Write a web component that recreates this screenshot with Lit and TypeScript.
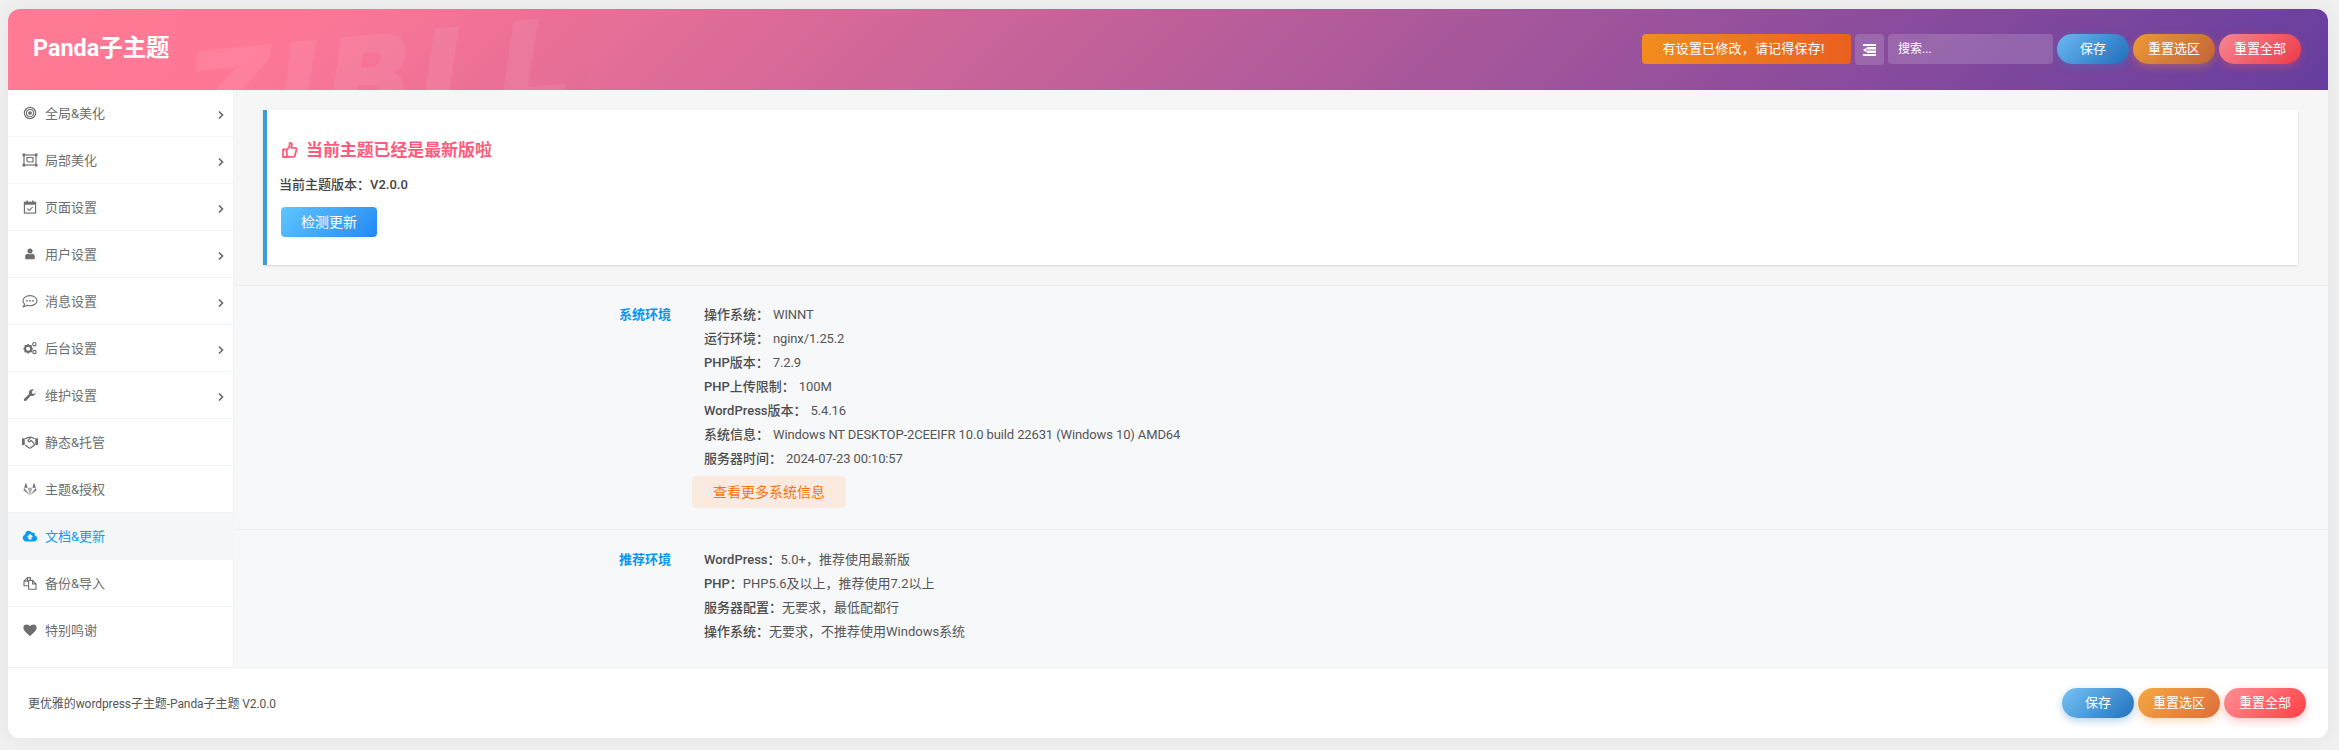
import { LitElement, html, css, svg } from "lit";
import { customElement } from "lit/decorators.js";

const ic = (body: unknown, s = 1) => html`<svg class="ic" viewBox="0 0 16 16" width="16" height="16" aria-hidden="true"><g transform="translate(8 8) scale(${s}) translate(-8 -8)">${body}</g></svg>`;

const icons: Record<string, unknown> = {
  target: ic(svg`<circle cx="8" cy="8" r="6.6" fill="none" stroke="currentColor" stroke-width="1.500"/><circle cx="8" cy="8" r="4.200" fill="none" stroke="currentColor" stroke-width="1.200"/><circle cx="8" cy="8" r="2.200" fill="currentColor"/>`, 0.85),
  crop: ic(svg`<g fill="none" stroke="currentColor" stroke-width="1.200"><rect x="2" y="3" width="12" height="10"/><path d="M5 5.500h6v4.500H6.500L5 9z"/></g><g fill="currentColor"><rect x="0.500" y="1.500" width="2.600" height="2.600"/><rect x="12.900" y="1.500" width="2.600" height="2.600"/><rect x="0.500" y="11.900" width="2.600" height="2.600"/><rect x="12.900" y="11.900" width="2.600" height="2.600"/></g>`),
  cal: ic(svg`<rect x="2.100" y="3" width="11.800" height="11.400" fill="none" stroke="currentColor" stroke-width="1.200"/><rect x="2" y="3" width="12" height="2.600" fill="currentColor"/><rect x="4.200" y="1.200" width="1.600" height="3" fill="currentColor"/><rect x="10.200" y="1.200" width="1.600" height="3" fill="currentColor"/><path d="M5.200 9.600l2 2 3.600-3.600" fill="none" stroke="currentColor" stroke-width="1.100"/>`, 0.95),
  user: ic(svg`<circle cx="8" cy="4.200" r="3.200" fill="currentColor"/><path d="M3 14.600c-.6 0-1-.4-1-1V11c0-2 1.400-3.400 3.200-3.400.8.500 1.800.8 2.800.8s2-.3 2.800-.8C12.600 7.600 14 9 14 11v2.600c0 .6-.4 1-1 1z" fill="currentColor"/>`, 0.8),
  chat: ic(svg`<path d="M8 2.600c-3.900 0-7 2.300-7 5.200 0 1.300.6 2.400 1.600 3.300-.2 1-.8 1.900-1.300 2.500 1.400-.1 2.600-.6 3.400-1.300.9.300 2 .5 3.300.5 3.900 0 7-2.300 7-5S11.900 2.600 8 2.600z" fill="none" stroke="currentColor" stroke-width="1.100"/><circle cx="5" cy="7.800" r=".9" fill="currentColor"/><circle cx="8" cy="7.800" r=".9" fill="currentColor"/><circle cx="11" cy="7.800" r=".9" fill="currentColor"/>`),
  cogs: ic(svg`<circle cx="6" cy="8.800" r="3.300" fill="none" stroke="currentColor" stroke-width="2.200"/><g stroke="currentColor" stroke-width="1.800"><path d="M6 3.600v2M6 12v2M.8 8.800h2M9.200 8.800h2M2.300 5.100l1.400 1.400M8.300 11.100l1.400 1.400M2.300 12.500l1.400-1.400M8.300 6.500l1.400-1.400"/></g><circle cx="12.800" cy="3.800" r="1.800" fill="none" stroke="currentColor" stroke-width="1.300"/><circle cx="12.800" cy="12.400" r="1.800" fill="none" stroke="currentColor" stroke-width="1.300"/>`, 0.92),
  wrench: ic(svg`<path d="M15.300 4.200l-2.500 2.500-2.300-.4-.4-2.300L12.600 1.500c-1.600-.7-3.500-.3-4.700.9-1.200 1.200-1.500 2.900-1 4.400L1.200 12.500c-.6.600-.6 1.600 0 2.200s1.600.6 2.200 0l5.700-5.700c1.500.5 3.200.2 4.400-1 1.200-1.200 1.600-3 .9-4.600z" fill="currentColor"/>`, 0.85),
  hands: ic(svg`<g fill="none" stroke="currentColor" stroke-width="1.200" stroke-linejoin="round"><path d="M3.500 4.800C5.500 4.200 6.500 3.300 8.500 3.400c1.500 0 2.600 1 4 1.400M3.500 10.800l3.300 2.700c.8.500 1.700.4 2.300-.2l3.400-2.700"/><path d="M8.500 3.800L6.300 6.500c-.5.900.8 1.700 1.600 1l1.300-1.100 3.200 4.100"/></g><path d="M0 4.500h3v6.400H0zM13 4.500h3v6.400h-3z" fill="currentColor"/>`, 1.05),
  gitlab: ic(svg`<path d="M8 15.200L5.200 6.600h5.600z" fill="currentColor" opacity=".55"/><path d="M8 15.200L.8 9.800c-.3-.2-.4-.5-.3-.8l.8-2.400zM8 15.200l7.200-5.400c.3-.2.4-.5.3-.8l-.8-2.400z" fill="currentColor" opacity=".85"/><path d="M1.300 6.600L3 1.400c.1-.3.500-.3.600 0l1.600 5.200zM14.700 6.600L13 1.400c-.1-.3-.5-.3-.6 0l-1.600 5.200z" fill="currentColor"/>`, 0.87),
  cloud: ic(svg`<path fill-rule="evenodd" d="M13.300 7.400c.1-.3.200-.6.200-1 0-1.300-1-2.300-2.300-2.300-.5 0-1 .2-1.300.4C9.200 3.100 7.900 2.300 6.500 2.300c-2.100 0-3.800 1.700-3.800 3.800v.3C1.100 7 0 8.500 0 10.200c0 2.100 1.700 3.800 3.800 3.800h8.800C14.500 14 16 12.500 16 10.600c0-1.500-1.100-2.800-2.700-3.200zM9.700 9.100v2.800H6.300V9.100H4.500L8 5.600l3.500 3.500z" fill="currentColor"/>`, 0.9),
  copy: ic(svg`<g fill="none" stroke="currentColor" stroke-width="1.200" stroke-linejoin="round"><path d="M6.500 11H1.500V6L5.200 2.200h3.300v3"/><path d="M5.200 2.200V6H1.500"/><path d="M6.500 5.200h4.300L14.500 9v5.800h-8z"/><path d="M10.800 5.200V9h3.700"/></g>`, 0.92),
  heart: ic(svg`<path d="M8 15C6 13 .3 9.300.3 5.300.3 3 2.100 1.600 4.200 1.600 5.800 1.600 7.200 2.400 8 3.700 8.800 2.400 10.200 1.600 11.800 1.600c2.100 0 3.900 1.400 3.900 3.700C15.700 9.300 10 13 8 15z" fill="currentColor"/>`, 0.86),
};

const NAV = [
  ["target", "全局&美化", true],
  ["crop", "局部美化", true],
  ["cal", "页面设置", true],
  ["user", "用户设置", true],
  ["chat", "消息设置", true],
  ["cogs", "后台设置", true],
  ["wrench", "维护设置", true],
  ["hands", "静态&托管", false],
  ["gitlab", "主题&授权", false],
  ["cloud", "文档&更新", false],
  ["copy", "备份&导入", false],
  ["heart", "特别鸣谢", false],
] as const;

const SYS = [
  ["操作系统：", "WINNT"],
  ["运行环境：", "nginx/1.25.2"],
  ["PHP版本：", "7.2.9"],
  ["PHP上传限制：", "100M"],
  ["WordPress版本：", "5.4.16"],
  ["系统信息：", "Windows NT DESKTOP-2CEEIFR 10.0 build 22631 (Windows 10) AMD64"],
  ["服务器时间：", "2024-07-23 00:10:57"],
];

const REC = [
  ["WordPress：", "5.0+，推荐使用最新版"],
  ["PHP：", "PHP5.6及以上，推荐使用7.2以上"],
  ["服务器配置：", "无要求，最低配都行"],
  ["操作系统：", "无要求，不推荐使用Windows系统"],
];

@customElement("app-root")
export class AppRoot extends LitElement {
  static styles = css`
    :host {
      display: block;
      height: 750px;
      background: #f0f0f1;
      font-family: Roboto, "Noto Sans CJK SC", sans-serif;
      font-size: 13px;
      color: #555;
      overflow: hidden;
    }
    .page { padding: 9px 11px 0 8px; }
    .wrap {
      height: 729px;
      border-radius: 12px;
      background: #fff;
      overflow: hidden;
      display: flex;
      flex-direction: column;
      box-shadow: 0 0 20px rgba(0, 0, 0, 0.05);
    }
    .head {
      position: relative;
      overflow: hidden;
      height: 81px;
      flex: none;
      display: flex;
      align-items: flex-start;
      background: linear-gradient(135deg, #ff7a94 0%, #fe7896 12%, #663e9f 100%);
      color: #fff;
    }
    .mark {
      position: absolute;
      left: 170px;
      top: 33px;
      font: 700 114px/1 "DejaVu Sans", sans-serif;
      letter-spacing: 7px;
      color: #fff;
      -webkit-text-stroke: 3px #fff;
      opacity: 0.065;
      transform-origin: 0 100%;
      transform: rotate(-5.4deg) skewX(-14deg);
      pointer-events: none;
    }
    .title {
      position: relative;
      margin: 22px 0 0 25px;
      font-size: 23.4px;
      line-height: 34px;
      font-weight: 700;
    }
    .tools {
      position: relative;
      margin-left: auto;
      margin-right: 27px;
      margin-top: 25px;
      display: flex;
      gap: 4px;
      align-items: flex-start;
    }
    .notice {
      width: 203px;
      padding-right: 6px;
      height: 30px;
      border-radius: 4px;
      background: linear-gradient(90deg, #f28c1e, #e9601f);
      font-size: 13px;
      letter-spacing: 0.2px;
      line-height: 30px;
      text-align: center;
    }
    .toggle {
      width: 29px;
      height: 31px;
      border-radius: 4px;
      background: rgba(255, 255, 255, 0.16);
      display: flex;
      align-items: center;
      justify-content: center;
    }
    .search {
      width: 155px;
      height: 30px;
      padding-left: 10px;
      border-radius: 4px;
      background: rgba(255, 255, 255, 0.16);
      font-size: 12px;
      line-height: 30px;
    }
    .pill {
      height: 30px;
      border-radius: 15px;
      color: #fff;
      font-size: 13px;
      line-height: 30px;
      text-align: center;
      width: 82px;
    }
    .pill.save { width: 72px; background: linear-gradient(135deg, #76c4f5, #2270bd); box-shadow: 0 3px 9px rgba(48,128,200,.35); }
    .pill.sel { background: linear-gradient(135deg, #f6a840, #db6f3b); box-shadow: 0 3px 9px rgba(240,140,50,.35); }
    .pill.all { background: linear-gradient(135deg, #ff8f94, #ff3f46); box-shadow: 0 3px 9px rgba(255,80,90,.35); }
    .head .pill.save { background: linear-gradient(135deg, #6cb8f2, #1f6dbb); }
    .head .pill.sel { background: linear-gradient(135deg, #ee9a36, #c1633a); }
    .head .pill.all { background: linear-gradient(135deg, #f58792, #ee3a48); }
    .mid { flex: 1; display: flex; min-height: 0; }
    .nav { width: 225px; flex: none; background: #fff; border-right: 1px solid #f2f3f5; }
    .item {
      height: 46px;
      border-bottom: 1px solid #f3f4f6;
      display: flex;
      align-items: center;
      padding: 0 11px 0 14px;
      color: #6e6e6e;
      font-size: 13px;
    }
    .item:last-child { border-bottom: 0; }
    .item span { padding-bottom: 2px; }
    .item.on { background: #f6f7f9; color: #0a9cf5; border-bottom-color: #f6f7f9; }
    .item .ic { flex: none; margin-right: 7px; }
    .item .chev { margin-left: auto; margin-top: 4px; margin-right: -3px; }
    .main { flex: 1; background: #f6f6f6; min-width: 0; display: flex; flex-direction: column; }
    .top { padding: 20px 30px 20px 29px; border-bottom: 1px solid #eeeff1; }
    .card {
      height: 155px;
      box-sizing: border-box;
      background: #fff;
      border-left: 4px solid #3a9fd6;
      box-shadow: 0 1px 2px rgba(0, 0, 0, 0.12);
      padding: 28px 12px 0 12px;
    }
    .h { display: flex; align-items: center; gap: 8px; color: #ff5b7c; font-size: 16.9px; font-weight: 700; line-height: 24px; margin-left: 3px; }
    .ver { margin-top: 13px; line-height: 20px; font-weight: 500; color: #444; }
    .ver b { font-weight: 500; }
    .check {
      margin: 12px 0 0 2px;
      width: 96px;
      height: 30px;
      border-radius: 4px;
      background: linear-gradient(135deg, #5fc6ff, #2389f5);
      color: #fff;
      font-size: 14px;
      line-height: 30px;
      text-align: center;
    }
    .sec { background: #f7f8fa; display: flex; border-bottom: 1px solid #eeeff1; }
    .sec.a { height: 244px; box-sizing: border-box; padding-top: 17px; }
    .sec.b { flex: 1; border-bottom: 0; padding-top: 18px; }
    .lab { width: 470px; flex: none; text-align: right; padding-right: 33px; box-sizing: border-box; color: #0a94f5; font-weight: 700; line-height: 24px; }
    .lines { line-height: 24px; }
    .lines b { font-weight: 500; color: #4d4d4d; }
    .k { margin-right: 4px; }
    .v { letter-spacing: -0.12px; }
    .more {
      display: block;
      margin: 5px 0 0 -12px;
      width: 154px;
      height: 32px;
      border-radius: 4px;
      background: #fbeadf;
      color: #f9730f;
      font-size: 14px;
      line-height: 32px;
      text-align: center;
    }
    .foot {
      height: 71px;
      flex: none;
      border-top: 1px solid #f0f1f3;
      box-sizing: border-box;
      background: #fff;
      display: flex;
      align-items: center;
      padding: 0 22px 0 20px;
      font-size: 12px;
      color: #555;
    }
    .foot .txt { letter-spacing: -0.08px; padding-bottom: 2px; }
    .foot .btns { margin-left: auto; display: flex; gap: 4px; }
  `;

  btns() {
    return html`<div class="pill save">保存</div><div class="pill sel">重置选区</div><div class="pill all">重置全部</div>`;
  }

  render() {
    return html`<div class="page"><div class="wrap">
      <header class="head">
        <div class="mark">ZIBLL</div>
        <div class="title">Panda子主题</div>
        <div class="tools">
          <div class="notice">有设置已修改，请记得保存!</div>
          <div class="toggle"><svg viewBox="0 0 13 12" width="13" height="12"><path fill="#fff" d="M0 0h13v2H0zM4 3h9v2.500H4zM4 6.500h9V9H4zM0 10h13v2H0zM3.500 3.500v5L0 6z"/></svg></div>
          <div class="search">搜索...</div>
          ${this.btns()}
        </div>
      </header>
      <div class="mid">
        <nav class="nav">
          ${NAV.map(([i, t, c]) => html`<div class="item ${t === "文档&更新" ? "on" : ""}">
            ${icons[i]}<span>${t}</span>
            ${c ? html`<svg class="chev" viewBox="0 0 8 10" width="8" height="10"><path d="M2 1.500L5.500 5 2 8.500" fill="none" stroke="#666" stroke-width="1.600"/></svg>` : ""}
          </div>`)}
        </nav>
        <main class="main">
          <div class="top"><div class="card">
            <div class="h"><svg viewBox="0 0 16 16" width="16" height="16"><path d="M4.800 7.500H1v7.500h3.800zM4.800 8l2.700-3.500V1.600c0-.8 2-1 2.400.5.300 1.200-.3 2.600-.8 3.700h4.200c1 0 1.500 1 1.200 1.800L12.900 13.600c-.2.800-.7 1.200-1.400 1.200H7c-.8 0-1.600-.4-2.200-.9" fill="none" stroke="currentColor" stroke-width="1.800" stroke-linejoin="round"/></svg><span>当前主题已经是最新版啦</span></div>
            <div class="ver">当前主题版本：<b>V2.0.0</b></div>
            <div class="check">检测更新</div>
          </div></div>
          <section class="sec a">
            <div class="lab">系统环境</div>
            <div class="lines">
              ${SYS.map(([k, v]) => html`<div><b class="k">${k}</b><span class="v">${v}</span></div>`)}
              <div class="more">查看更多系统信息</div>
            </div>
          </section>
          <section class="sec b">
            <div class="lab">推荐环境</div>
            <div class="lines">
              ${REC.map(([k, v]) => html`<div><b>${k}</b>${v}</div>`)}
            </div>
          </section>
        </main>
      </div>
      <footer class="foot">
        <span class="txt">更优雅的wordpress子主题-Panda子主题 V2.0.0</span>
        <div class="btns">${this.btns()}</div>
      </footer>
    </div></div>`;
  }
}
